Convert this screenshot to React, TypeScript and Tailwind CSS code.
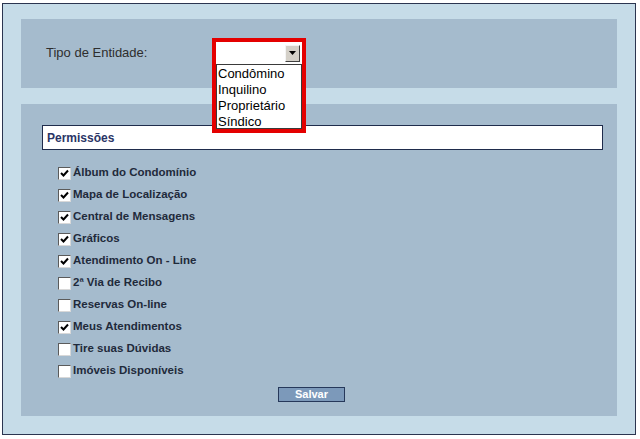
import React from 'react';

const permissoes: { label: string; checked: boolean }[] = [
  { label: 'Álbum do Condomínio', checked: true },
  { label: 'Mapa de Localização', checked: true },
  { label: 'Central de Mensagens', checked: true },
  { label: 'Gráficos', checked: true },
  { label: 'Atendimento On - Line', checked: true },
  { label: '2ª Via de Recibo', checked: false },
  { label: 'Reservas On-line', checked: false },
  { label: 'Meus Atendimentos', checked: true },
  { label: 'Tire suas Dúvidas', checked: false },
  { label: 'Imóveis Disponíveis', checked: false },
];

const opcoes = ['Condômino', 'Inquilino', 'Proprietário', 'Síndico'];

// classic win32-looking checkbox
const CheckBox: React.FC<{ checked: boolean }> = ({ checked }) => (
  <span className="flex h-[13px] w-[13px] shrink-0 items-center justify-center border border-t-[#5b5b5b] border-l-[#5b5b5b] border-r-[#d8d8d8] border-b-[#d8d8d8] bg-white">
    {checked && (
      <svg width="9" height="9" viewBox="0 0 9 9">
        <path d="M1 4 L3.5 6.5 L8 1.5" stroke="#000" strokeWidth="2" fill="none" />
      </svg>
    )}
  </span>
);

export default function App() {
  return (
    <div className="h-[439px] w-[640px] bg-white pl-[2px] pt-[3px] [font-family:'Liberation_Sans',Arial,sans-serif]">
      <div className="flex h-[432px] w-[634px] flex-col gap-[16px] border border-[#2b3550] bg-[#c6dce8] px-[18px] pb-[18px] pt-[15px]">
        {/* Tipo de entidade */}
        <div className="flex h-[69px] shrink-0 items-start bg-[#a5bbcd] pl-[25px]">
          <span className="mt-[26px] w-[166px] text-[13px] leading-[15px] text-[#2e2e2e]">Tipo de Entidade:</span>
          <div className="relative z-10 mt-[19px] h-[95px] w-[94px] border-[4px] border-[#e40000] bg-white">
            <div className="flex h-[22px] items-center justify-end pr-[2px]">
              <span className="flex h-[17px] w-[15px] items-center justify-center border border-t-[#f4f4f4] border-l-[#f4f4f4] border-r-[#404040] border-b-[#404040] bg-[#d4d0c8]">
                <svg width="7" height="4" viewBox="0 0 7 4">
                  <path d="M0 0 H7 L3.5 4 Z" fill="#000" />
                </svg>
              </span>
            </div>
            <div className="flex h-[65px] flex-col border border-[#3a3a3a] bg-white pt-[1px]">
              {opcoes.map((o) => (
                <span key={o} className="h-[16px] pl-[1px] text-[13px] leading-[16px] text-black">
                  {o}
                </span>
              ))}
            </div>
          </div>
        </div>

        {/* Permissões */}
        <div className="flex flex-1 flex-col bg-[#a5bbcd] pl-[21px] pr-[14px] pt-[21px]">
          <div className="flex h-[25px] items-center border border-[#1f2c4c] bg-white pl-[4px]">
            <span className="text-[12px] font-bold text-[#2a3566]">Permissões</span>
          </div>
          <div className="mt-[12px] flex flex-col pl-[16px]">
            {permissoes.map((p) => (
              <label key={p.label} className="flex h-[22px] items-center gap-[2px]">
                <CheckBox checked={p.checked} />
                <span className="text-[11.5px] font-bold text-[#1f2a3b]">{p.label}</span>
              </label>
            ))}
          </div>
          <div className="mt-[5px] flex pl-[236px]">
            <button className="h-[15px] w-[67px] border border-[#26385a] bg-[#7c99ba] text-[11px] font-bold leading-[13px] text-white">
              Salvar
            </button>
          </div>
        </div>
      </div>
    </div>
  );
}
